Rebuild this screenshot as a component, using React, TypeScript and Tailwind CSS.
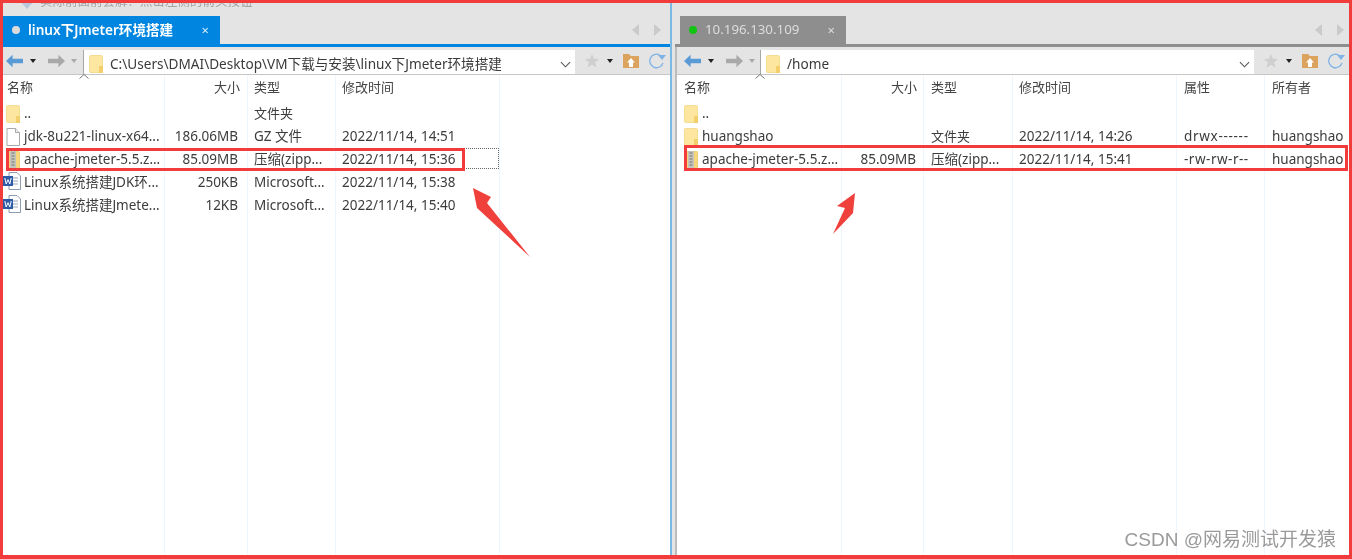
import React from "react";

const font = { fontFamily: '"Noto Sans", "Noto Sans CJK SC", sans-serif' };

function FolderIcon({ className = "" }: { className?: string }) {
  return (
    <svg viewBox="0 0 14 18" className={"w-[14px] h-[18px] shrink-0 " + className}>
      <rect x="0.5" y="0.5" width="13" height="17" rx="1" fill="#fde7a0" stroke="#f4dc92" />
      <rect x="10" y="11" width="4" height="7" fill="#f3cf6b" />
    </svg>
  );
}

function FileIcon() {
  return (
    <svg viewBox="0 0 14 18" className="w-[14px] h-[18px] shrink-0">
      <path d="M1 .5h8.5L13.5 4.5V17.5H1z" fill="#fff" stroke="#a8a8a8" />
      <path d="M9.5 .5V4.5H13.5" fill="#eee" stroke="#a8a8a8" />
    </svg>
  );
}

function ZipIcon() {
  return (
    <svg viewBox="0 0 14 18" className="w-[14px] h-[18px] shrink-0">
      <rect x="0.5" y="0.5" width="13" height="17" rx="1" fill="#f6d679" stroke="#efcf77" />
      <rect x="4" y="0" width="6" height="18" fill="#c4c4bc" />
      <path d="M5.500 2h3M5.500 5h3M5.500 8h3M5.500 11h3M5.500 14h3" stroke="#77776f" strokeWidth="1" />
    </svg>
  );
}

function WordIcon() {
  return (
    <svg viewBox="0 0 18 18" className="w-[18px] h-[18px] shrink-0">
      <path d="M6 .5h8l3.500 3.500v13.500H6z" fill="#fff" stroke="#8e9cb0" />
      <path d="M9 6h6M9 9h6M9 12h6" stroke="#9aa7ba" />
      <rect x="0" y="4" width="10" height="10" fill="#2c5ba8" />
      <path d="M1.800 6l1.400 6 1.800-4.400L6.800 12l1.400-6" fill="none" stroke="#fff" strokeWidth="1" />
    </svg>
  );
}

function ArrowIcon({ dir, color }: { dir: "l" | "r"; color: string }) {
  return (
    <svg viewBox="0 0 18 14" className="w-[17px] h-[14px] shrink-0">
      <path
        d={dir === "l" ? "M0 7L7 0.500V4.500H18V9.500H7V13.500Z" : "M18 7L11 0.500V4.500H0V9.500H11V13.500Z"}
        fill={color}
      />
    </svg>
  );
}

function Caret({ color }: { color: string }) {
  return (
    <svg viewBox="0 0 6 4" className="w-[6px] h-[4px] shrink-0">
      <path d="M0 0H6L3 4Z" fill={color} />
    </svg>
  );
}

function Toolbar({ path, right }: { path: string; right: boolean }) {
  return (
    <div className="h-[28px] flex bg-[#e4e4e4] border-b border-[#c6c6c6] shrink-0">
      <div className={"flex items-center shrink-0 " + (right ? "w-[83px] pl-[7px]" : "w-[80px] pl-[3px]")}>
        <ArrowIcon dir="l" color="#5b9bd5" />
        <span className="ml-[7px]"><Caret color="#222" /></span>
        <span className="ml-[12px]"><ArrowIcon dir="r" color="#a9a9a9" /></span>
        <span className="ml-[6px]"><Caret color="#a9a9a9" /></span>
      </div>
      <div className="flex-1 min-w-0 mt-[3px] bg-white border-l border-[#a8a8a8] flex items-center pl-[5px] pr-[4px] pt-[4px]">
        <FolderIcon />
        <span className="ml-[7px] text-[13.600px] text-[#3a3a3a] whitespace-nowrap">{path}</span>
        <svg viewBox="0 0 12 7" className="w-[11px] h-[7px] ml-auto">
          <path d="M1 1L6 6L11 1" fill="none" stroke="#555" strokeWidth="1.200" />
        </svg>
      </div>
      <div className="w-[95px] shrink-0 flex items-center pl-[10px]">
        <svg viewBox="0 0 14 14" className="w-[14px] h-[14px] shrink-0">
          <path d="M7 0l2 4.700 5 .4-3.800 3.300 1.200 5L7 10.700 2.600 13.400l1.200-5L0 5.100l5-.4z" fill="#cfcfcf" />
        </svg>
        <span className="ml-[8px]"><Caret color="#222" /></span>
        <svg viewBox="0 0 16 14" className="w-[16px] h-[14px] ml-[10px] shrink-0">
          <path d="M0 0H6L8 2H16V14H0Z" fill="#dba35e" />
          <path d="M8 4L12 8.500H10V13H6V8.500H4Z" fill="#fff" />
        </svg>
        <svg viewBox="0 0 18 18" className="w-[18px] h-[18px] ml-[9px] shrink-0">
          <path d="M15 11A6.800 6.800 0 1 1 11.500 2.800" fill="none" stroke="#7fb2e5" strokeWidth="1.300" />
          <path d="M10 3H18L14 8Z" fill="#7fb2e5" />
        </svg>
      </div>
    </div>
  );
}

type Column = {
  w: string;
  header: string;
  end?: boolean;
  pad: string;
  headPad?: string;
  cells: React.ReactNode[];
};

function Table({ cols }: { cols: Column[] }) {
  return (
    <div className="flex-1 min-h-0 flex bg-white overflow-hidden text-[13.500px] text-[#3c3c3c] whitespace-nowrap">
      {cols.map((c, i) => (
        <div key={i} className={c.w + " flex flex-col border-r border-[#eef5fd] last:border-r-0"}>
          <div className={"h-[27px] shrink-0 flex pt-[3px] text-[13px] " + (c.headPad ?? c.pad) + (c.end ? " justify-end" : "")}>
            <span className="text-[#444]">{c.header}</span>
          </div>
          {c.cells.map((cell, j) => (
            <div key={j} className={"h-[23px] shrink-0 flex items-center " + c.pad + (c.end ? " justify-end" : "")}>
              {cell}
            </div>
          ))}
        </div>
      ))}
    </div>
  );
}

function Name({ icon, text, word }: { icon: React.ReactNode; text: string; word?: boolean }) {
  return (
    <>
      <span className={word ? "w-[21px] shrink-0" : "w-[18px] shrink-0"}>{icon}</span>
      <span>{text}</span>
    </>
  );
}

const Folder3 = <span className="text-[13px]">文件夹</span>;

const leftCols: Column[] = [
  {
    w: "w-[162px]",
    header: "名称",
    pad: "pl-[3px]",
    headPad: "pl-[4px]",
    cells: [
      <Name icon={<FolderIcon />} text=".." />,
      <Name icon={<FileIcon />} text="jdk-8u221-linux-x64..." />,
      <Name icon={<ZipIcon />} text="apache-jmeter-5.5.z..." />,
      <span className="-ml-[3px] flex"><Name word icon={<WordIcon />} text="Linux系统搭建JDK环..." /></span>,
      <span className="-ml-[3px] flex"><Name word icon={<WordIcon />} text="Linux系统搭建Jmete..." /></span>,
    ],
  },
  {
    w: "w-[83px]",
    header: "大小",
    end: true,
    pad: "pr-[9px]",
    headPad: "pr-[7px]",
    cells: ["", "186.06MB", "85.09MB", "250KB", "12KB"],
  },
  {
    w: "w-[88px]",
    header: "类型",
    pad: "pl-[6px]",
    cells: [Folder3, "GZ 文件", "压缩(zipp...", "Microsoft...", "Microsoft..."],
  },
  {
    w: "w-[164px]",
    header: "修改时间",
    pad: "pl-[6px]",
    cells: ["", "2022/11/14, 14:51", "2022/11/14, 15:36", "2022/11/14, 15:38", "2022/11/14, 15:40"],
  },
  { w: "flex-1", header: "", pad: "", cells: [] },
];

const rightCols: Column[] = [
  {
    w: "w-[165px]",
    header: "名称",
    pad: "pl-[7px]",
    cells: [
      <Name icon={<FolderIcon />} text=".." />,
      <Name icon={<FolderIcon />} text="huangshao" />,
      <Name icon={<ZipIcon />} text="apache-jmeter-5.5.z..." />,
    ],
  },
  { w: "w-[82px]", header: "大小", end: true, pad: "pr-[7px]", headPad: "pr-[6px]", cells: ["", "", "85.09MB"] },
  { w: "w-[89px]", header: "类型", pad: "pl-[7px]", cells: ["", Folder3, "压缩(zipp..."] },
  {
    w: "w-[164px]",
    header: "修改时间",
    pad: "pl-[6px]",
    cells: ["", "2022/11/14, 14:26", "2022/11/14, 15:41"],
  },
  {
    w: "w-[88px]",
    header: "属性",
    pad: "pl-[7px]",
    cells: ["", <span className="tracking-[0.7px]">drwx------</span>, <span className="tracking-[0.5px]">-rw-rw-r--</span>],
  },
  { w: "flex-1", header: "所有者", pad: "pl-[7px]", cells: ["", "huangshao", "huangshao"] },
];

function NavTriangles({ className }: { className: string }) {
  return (
    <div className={"flex items-center gap-[15px] " + className}>
      <svg viewBox="0 0 7 12" className="w-[7px] h-[12px]"><path d="M7 0V12L0 6Z" fill="#cacaca" /></svg>
      <svg viewBox="0 0 7 12" className="w-[7px] h-[12px]"><path d="M0 0V12L7 6Z" fill="#cacaca" /></svg>
    </div>
  );
}

export default function App() {
  return (
    <div style={font} className="relative w-[1352px] h-[559px] border-[3px] border-b-4 border-[#f23c3c] flex overflow-hidden bg-[#e4e4e4] blur-[0.35px]">
      {/* left pane */}
      <div className="w-[669px] shrink-0 flex flex-col border-r-2 border-[#7ab8e6]">
        <div className="h-[41px] shrink-0 flex flex-col">
          <div className="h-[13px] overflow-hidden shrink-0 flex gap-[6px] pl-[17px] text-[12.500px] text-[#a4a4a4] leading-none">
            <svg viewBox="0 0 14 8" className="w-[14px] h-[6px] shrink-0">
              <path d="M0 0H14L7 8Z" fill="#b9c6dc" />
            </svg>
            <span className="-mt-[7px] whitespace-nowrap">实际前面前会解？点击左侧的箭头按钮</span>
          </div>
          <div className="flex-1 flex">
            <div className="w-[217px] bg-[#0086e0] flex items-center pl-[9px] pr-[11px] text-white">
              <span className="w-2 h-2 rounded-full bg-[#dcdcdc] shrink-0" />
              <span className="ml-[8px] text-[13.600px] font-semibold whitespace-nowrap">linux下Jmeter环境搭建</span>
              <span className="ml-auto text-[13px] leading-none text-[#d7ecfb]">×</span>
            </div>
            <NavTriangles className="ml-[412px]" />
          </div>
        </div>
        <div className="h-[3px] bg-[#0086e0] shrink-0" />
        <Toolbar path="C:\Users\DMAI\Desktop\VM下载与安装\linux下Jmeter环境搭建" right={false} />
        <Table cols={leftCols} />
      </div>

      {/* gutter */}
      <div className="w-[3px] shrink-0" />

      {/* right pane */}
      <div className="flex-1 min-w-0 flex flex-col">
        <div className="h-[41px] shrink-0 flex pl-[5px] pt-[13px]">
          <div className="w-[166px] bg-[#8e8e8e] flex items-center pl-[9px] pr-[11px]">
            <span className="w-2 h-2 rounded-full bg-[#12c412] shrink-0" />
            <span className="ml-[8px] text-[13.300px] text-[#dcdcdc] whitespace-nowrap">10.196.130.109</span>
            <span className="ml-auto text-[13px] leading-none text-[#dedede]">×</span>
          </div>
          <NavTriangles className="ml-[469px]" />
        </div>
        <div className="h-[3px] bg-[#8e8e8e] shrink-0" />
        <div className="flex-1 min-h-0 flex flex-col border-l-2 border-[#bcbcbc]">
          <Toolbar path="/home" right />
          <Table cols={rightCols} />
        </div>
      </div>

      {/* sort markers */}
      <svg viewBox="0 0 10 5" className="absolute left-[76px] top-[71px] w-[10px] h-[5px]">
        <path d="M0.500 4.500L5 0.500L9.500 4.500" fill="none" stroke="#777" />
      </svg>
      <svg viewBox="0 0 10 5" className="absolute left-[752px] top-[71px] w-[10px] h-[5px]">
        <path d="M0.500 4.500L5 0.500L9.500 4.500" fill="none" stroke="#777" />
      </svg>

      {/* focus rectangle */}
      <div className="absolute left-[460px] top-[145px] w-[36px] h-[21px] border border-dotted border-[#666]" />

      {/* red annotation boxes */}
      <div className="absolute left-[3px] top-[145px] w-[459px] h-[23px] border-[3px] border-[#f23c3c]" />
      <div className="absolute left-[681px] top-[142px] w-[664px] h-[26px] border-[3px] border-[#f23c3c]" />

      {/* red annotation arrows */}
      <svg viewBox="0 0 1352 559" className="absolute -left-[3px] -top-[3px] w-[1352px] h-[559px] pointer-events-none">
        <polygon points="473,188 491,197 487,203 530,257 477,208" fill="#f0403c" />
        <polygon points="855,193 837,206 845,208 833,234 853,213" fill="#f0403c" />
      </svg>

      {/* watermark */}
      <div
        className="absolute right-[13px] bottom-[2px] text-[19px] leading-[26px] text-[#9a9a9a] whitespace-nowrap"
        style={{ fontFamily: '"Liberation Sans", "Noto Sans CJK SC", sans-serif' }}
      >
        CSDN @网易测试开发猿
      </div>
    </div>
  );
}
